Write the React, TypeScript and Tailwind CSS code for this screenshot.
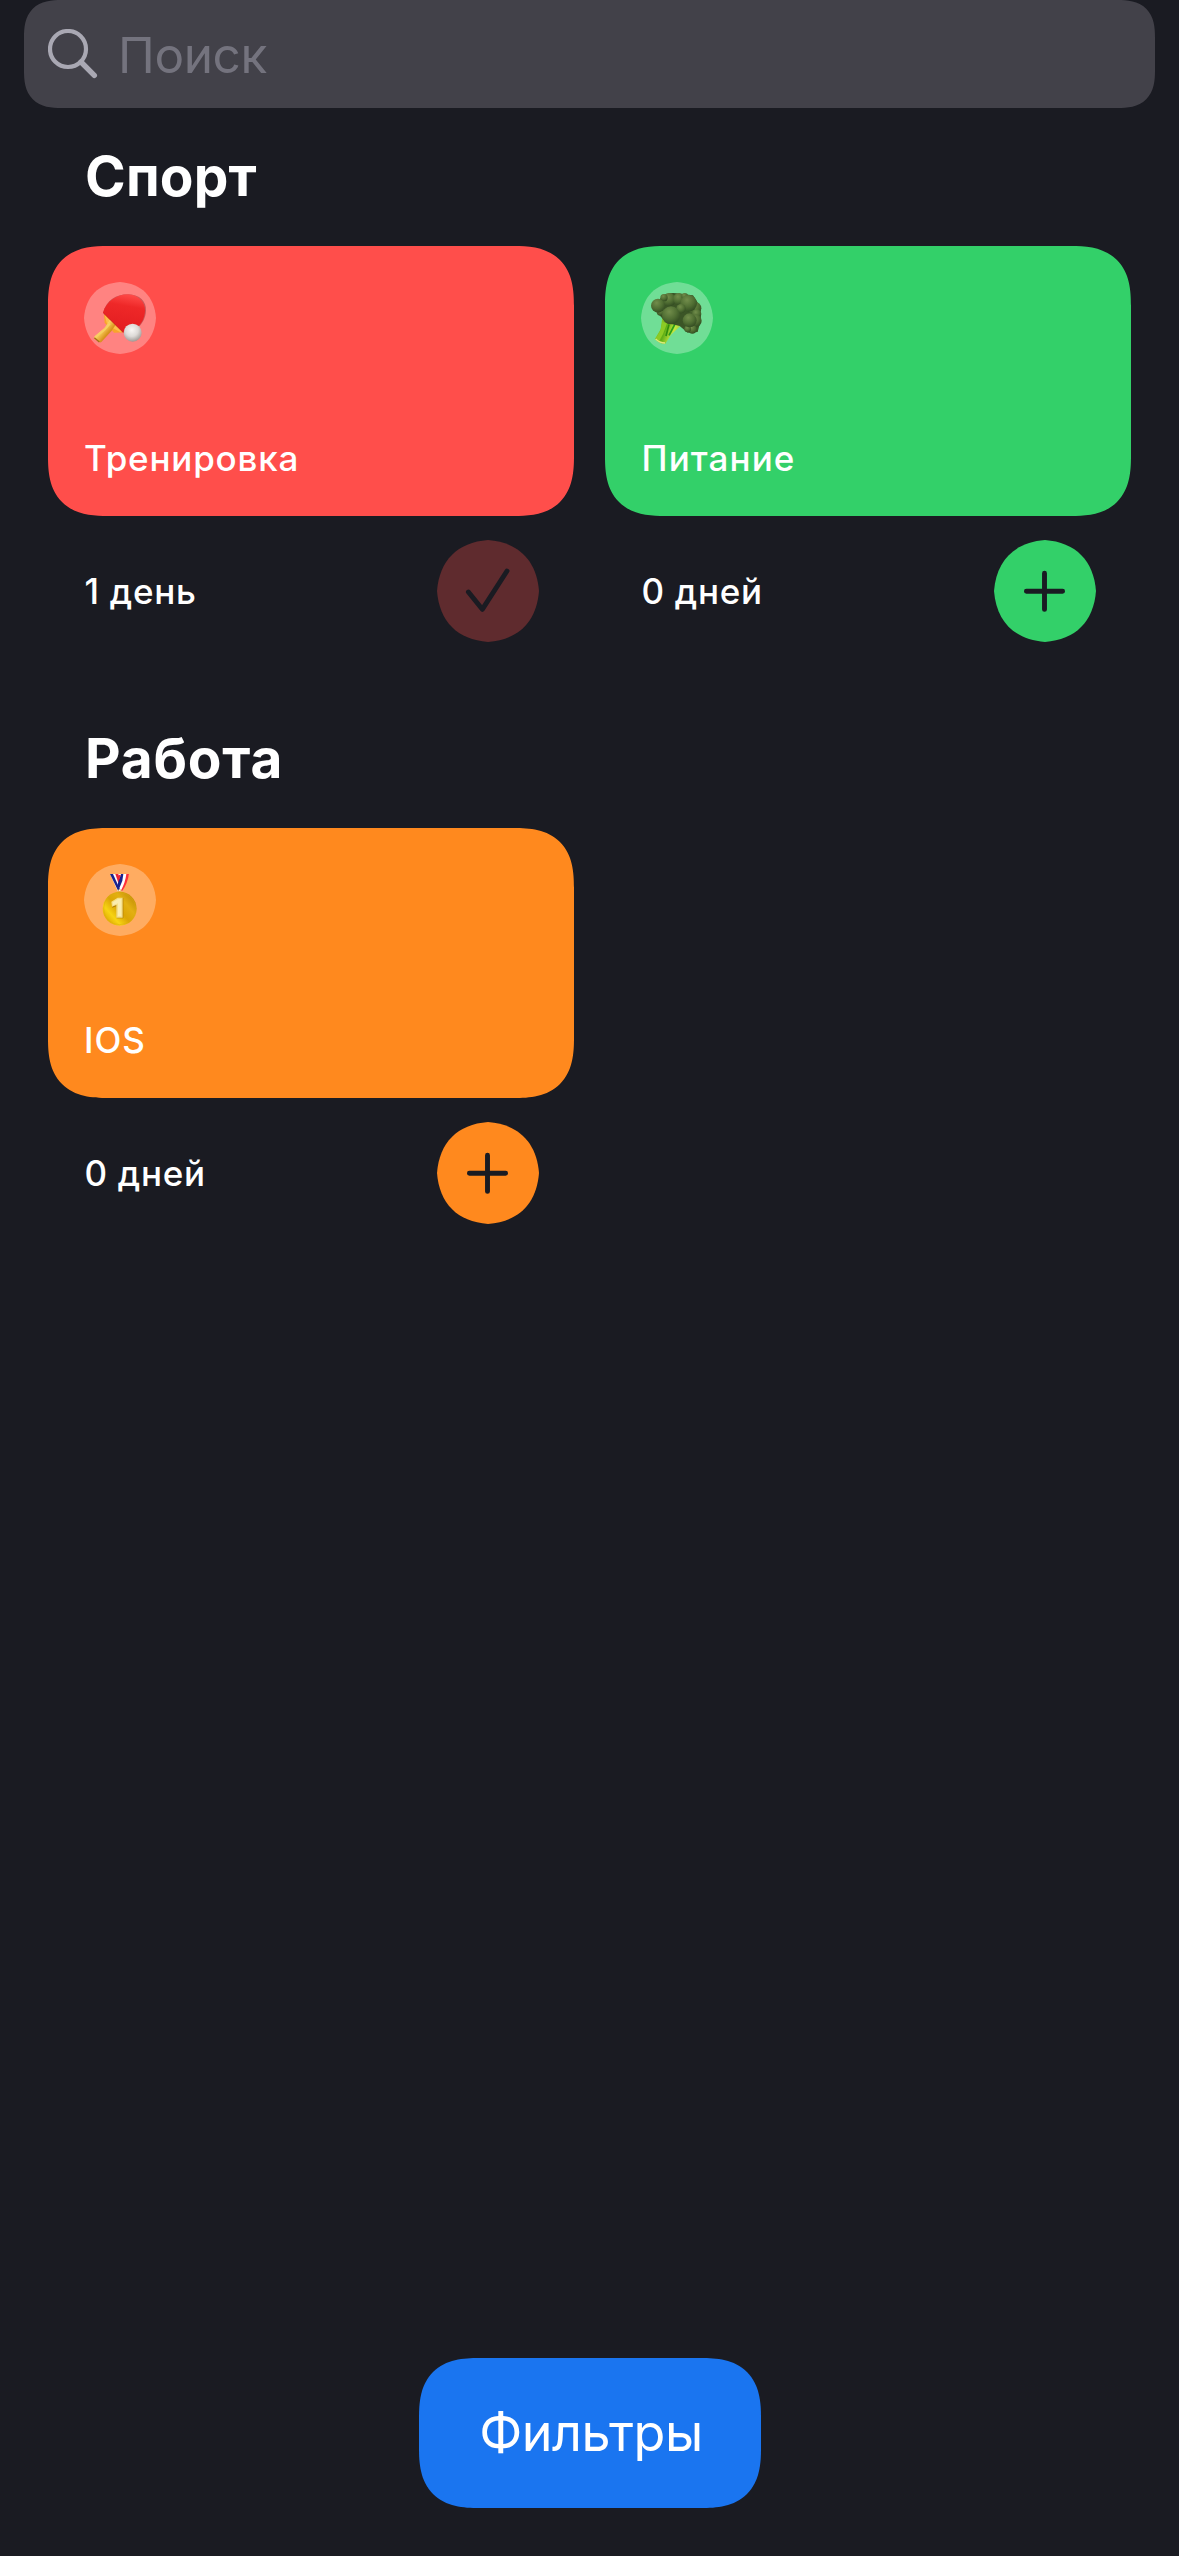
import type { ReactNode } from "react";

const DISC = "M0 51C2.4 20.4 20.4 2.4 51 0C81.6 2.4 99.6 20.4 102 51C99.6 81.6 81.6 99.6 51 102C20.4 99.6 2.4 81.6 0 51Z";

function Paddle() {
  return (
    <svg viewBox="42 36 216 216" className="absolute inset-0 size-full">
      <defs>
        <linearGradient id="rubber" x1="0.6" y1="0" x2="0.4" y2="1">
          <stop offset="0" stopColor="#ff4a48" />
          <stop offset="0.3" stopColor="#ee2828" />
          <stop offset="1" stopColor="#e21c20" />
        </linearGradient>
        <linearGradient id="handle" x1="0" y1="0" x2="1" y2="0.9">
          <stop offset="0" stopColor="#e8a52c" />
          <stop offset="0.4" stopColor="#ffd96a" />
          <stop offset="0.65" stopColor="#d9921d" />
          <stop offset="1" stopColor="#a9680f" />
        </linearGradient>
        <radialGradient id="ball" cx="0.45" cy="0.35" r="0.65">
          <stop offset="0" stopColor="#f8f6f4" />
          <stop offset="0.55" stopColor="#dddad7" />
          <stop offset="1" stopColor="#a09a96" />
        </radialGradient>
      </defs>
      <path d="M102 130L99 128C110 90 140 72 176 73C208 74 230 94 228 122C227 145 216 160 207 170Z" fill="#c9585a" />
      <path d="M102 132L104 159L118 172L132 188L168 187L160 170Z" fill="#f8a52a" />
      <path d="M104 134L122 152L138 160L158 184L150 186L128 174L110 158Z" fill="#ffc75a" opacity="0.7" />
      <path d="M120 149L138 163L124 184L94 216Q89 219 84 214L73 206Q70 202 75 198L103 174Q110 165 120 149Z" fill="url(#handle)" />
      <path d="M75 199L103 176L118 158L122 163L106 181L78 204Z" fill="#f7cf62" />
      <path d="M73 203L88 216" stroke="#a56d18" strokeWidth="4" />
      <path d="M99 128C110 92 140 73 174 73C206 75 226 96 225 122C224 145 215 160 203 170Q181 187 160 188Z" fill="url(#rubber)" />
      <path d="M100 129L160 188" stroke="#b41016" strokeWidth="1.5" />
      <circle cx="188" cy="188" r="27" fill="url(#ball)" />
    </svg>
  );
}

function Broccoli() {
  return (
    <svg viewBox="34 66 216 216" className="absolute inset-0 size-full">
      <defs>
        <radialGradient id="floret" cx="0.4" cy="0.3" r="0.75">
          <stop offset="0" stopColor="#728d4b" />
          <stop offset="0.55" stopColor="#506e33" />
          <stop offset="1" stopColor="#304920" />
        </radialGradient>
        <linearGradient id="stem" x1="0" y1="0.4" x2="1" y2="0.7">
          <stop offset="0" stopColor="#a5d12c" />
          <stop offset="0.3" stopColor="#5fae16" />
          <stop offset="0.55" stopColor="#c5e640" />
          <stop offset="1" stopColor="#4d9c17" />
        </linearGradient>
      </defs>
      <path d="M98 172L93 208L76 236Q88 252 107 251L124 224L154 196L176 192L160 176Z" fill="url(#stem)" />
      <path d="M98 186L112 190L100 222L88 244L78 237L92 212Z" fill="#8ccb24" />
      <path d="M118 193L109 228" stroke="#318c0d" strokeWidth="5" />
      <path d="M136 192L118 226" stroke="#299d17" strokeWidth="5" />
      <path d="M78 237Q90 249 106 249" stroke="#dbea7b" strokeWidth="4" fill="none" />
      <path d="M92 115Q112 93 150 101L190 106L212 140L214 178L204 216L174 218L150 198L110 188L84 160Z" fill="#3b5526" />
      <g>
        <circle cx="118" cy="119" r="20" fill="url(#floret)" />
        <circle cx="148" cy="117" r="18" fill="url(#floret)" />
        <circle cx="103" cy="113" r="11" fill="url(#floret)" />
        <circle cx="165" cy="109" r="10" fill="url(#floret)" />
        <circle cx="93" cy="155" r="12" fill="url(#floret)" />
        <circle cx="85" cy="137" r="21" fill="url(#floret)" />
        <circle cx="195" cy="145" r="20" fill="url(#floret)" />
        <circle cx="201" cy="162" r="14" fill="url(#floret)" />
        <circle cx="177" cy="130" r="25" fill="url(#floret)" />
        <circle cx="154" cy="146" r="14" fill="url(#floret)" />
        <circle cx="197" cy="182" r="19" fill="url(#floret)" />
        <circle cx="188" cy="208" r="13" fill="url(#floret)" />
        <circle cx="174" cy="207" r="10" fill="url(#floret)" />
        <circle cx="180" cy="181" r="21" fill="url(#floret)" />
        <circle cx="124" cy="166" r="27" fill="url(#floret)" />
      </g>
    </svg>
  );
}

function Medal() {
  return (
    <svg viewBox="42 42 216 216" className="absolute inset-0 size-full">
      <defs>
        <linearGradient id="gold" x1="0.1" y1="0.9" x2="0.9" y2="0.2">
          <stop offset="0" stopColor="#dda600" />
          <stop offset="0.25" stopColor="#f7d413" />
          <stop offset="0.5" stopColor="#dba504" />
          <stop offset="0.75" stopColor="#e3b012" />
          <stop offset="1" stopColor="#c79308" />
        </linearGradient>
      </defs>
      <path d="M120 72H177L157 123H143Z" fill="#fff" />
      <path d="M120 72H129L149 116L145 124Z" fill="#17228c" />
      <path d="M136 72H145L151 91L147 104Z" fill="#ee2339" />
      <path d="M153 72H160L157 92L147 117L142 106Z" fill="#17228c" />
      <path d="M169 72H177Q173 99 157 123H152Q166 98 169 72Z" fill="#ff3038" />
      <path d="M150 75L145 88" stroke="#ed2437" strokeWidth="5" />
      <circle cx="149" cy="124" r="5" fill="none" stroke="#e1c56a" strokeWidth="3" />
      <circle cx="149" cy="176" r="51" fill="url(#gold)" />
      <circle cx="149" cy="176" r="48" fill="none" stroke="#d9ab12" strokeWidth="2" opacity="0.7" />
      <path d="M126 158L146 144H160V205H140V168L127 173Z" fill="#b07c05" />
      <path d="M124 155L143 143H158V203H139V165L126 170Z" fill="#f5df86" />
      <path d="M128 157L144 147H154V199H144V160L129 166Z" fill="#faecae" />
    </svg>
  );
}

function PlusMark() {
  return <path d="M50.5 33.2V69.4M32.4 51.3H68.6" />;
}

function CheckMark() {
  return <path d="M31.4 52L45.3 69.3L70 31" />;
}

type HabitProps = {
  name: string;
  nameClass: string;
  days: string;
  cardClass: string;
  discClass: string;
  emoji: ReactNode;
  done?: boolean;
};

function Habit({ name, nameClass, days, cardClass, discClass, emoji, done }: HabitProps) {
  return (
    <article>
      <div className={`flex h-[270px] flex-col justify-between rounded-[60px] px-9 pt-9 pb-[37px] [corner-shape:superellipse(1.38)] ${cardClass}`}>
        <div className="relative size-[72px]">
          <svg viewBox="0 0 102 102" className="size-full">
            <path d={DISC} fill="#fff" fillOpacity="0.3" />
          </svg>
          {emoji}
        </div>
        <h3 className={`text-[35px] leading-[42px] font-medium ${nameClass}`}>{name}</h3>
      </div>
      <div className="mt-6 flex h-[102px] items-center justify-between pr-[35px] pl-[36.5px]">
        <span className="text-[35px] leading-[42px] font-medium tracking-[0.7px]">{days}</span>
        <button aria-label={done ? "Выполнено" : "Отметить"} className="size-[102px]">
          <svg viewBox="0 0 102 102" className="size-full">
            <path d={DISC} className={discClass} />
            <g fill="none" stroke="#1a1b22" strokeWidth="4.9" strokeLinecap="round" strokeLinejoin="round">
              {done ? <CheckMark /> : <PlusMark />}
            </g>
          </svg>
        </button>
      </div>
    </article>
  );
}

function Section({ title, titleClass, children }: { title: string; titleClass: string; children: ReactNode }) {
  return (
    <section>
      <h2 className={`pl-[37px] text-[55px] leading-[60px] font-bold ${titleClass}`}>{title}</h2>
      <div className="mt-[39px] grid grid-cols-2 gap-x-[31px]">{children}</div>
    </section>
  );
}

export default function App() {
  return (
    <div className="flex h-[2556px] w-[1179px] flex-col bg-[#1a1b22] font-['Inter','Liberation_Sans',sans-serif] text-white">
      <div className="mx-6 flex h-[108px] shrink-0 items-center rounded-[37.5px] bg-[#424149] pl-6 [corner-shape:superellipse(1.38)]">
        <svg viewBox="0 0 50 50" className="size-[50px] shrink-0" fill="none" stroke="#a9a8b3" strokeLinecap="round">
          <circle cx="20" cy="20" r="18" strokeWidth="4.2" />
          <path d="M33 33L46.3 46.4" strokeWidth="5.4" />
        </svg>
        <span className="mt-0.5 ml-5 text-[49.5px] leading-[60px] tracking-[-0.4px] text-[#74737e]">Поиск</span>
      </div>

      <main className="mt-[38px] flex grow flex-col gap-[86px] px-12">
        <Section title="Спорт" titleClass="tracking-[0.2px] pb-px">
          <Habit name="Тренировка" nameClass="tracking-[0.8px]" days="1 день" cardClass="bg-[#ff4e4b]" discClass="fill-[#5f2b2e]" emoji={<Paddle />} done />
          <Habit name="Питание" nameClass="pl-[0.5px] tracking-[1.1px]" days="0 дней" cardClass="bg-[#33d069]" discClass="fill-[#33d069]" emoji={<Broccoli />} />
        </Section>
        <Section title="Работа" titleClass="tracking-[0.8px] pb-px">
          <Habit name="IOS" nameClass="tracking-[0.9px]" days="0 дней" cardClass="bg-[#ff891e]" discClass="fill-[#ff891e]" emoji={<Medal />} />
        </Section>
      </main>

      <button className="mb-12 ml-[419px] h-[150px] w-[342px] shrink-0 rounded-[60px] bg-[#1a75f0] pl-0.5 text-[52px] leading-[60px] tracking-[-0.5px] [corner-shape:superellipse(1.38)]">
        Фильтры
      </button>
    </div>
  );
}
